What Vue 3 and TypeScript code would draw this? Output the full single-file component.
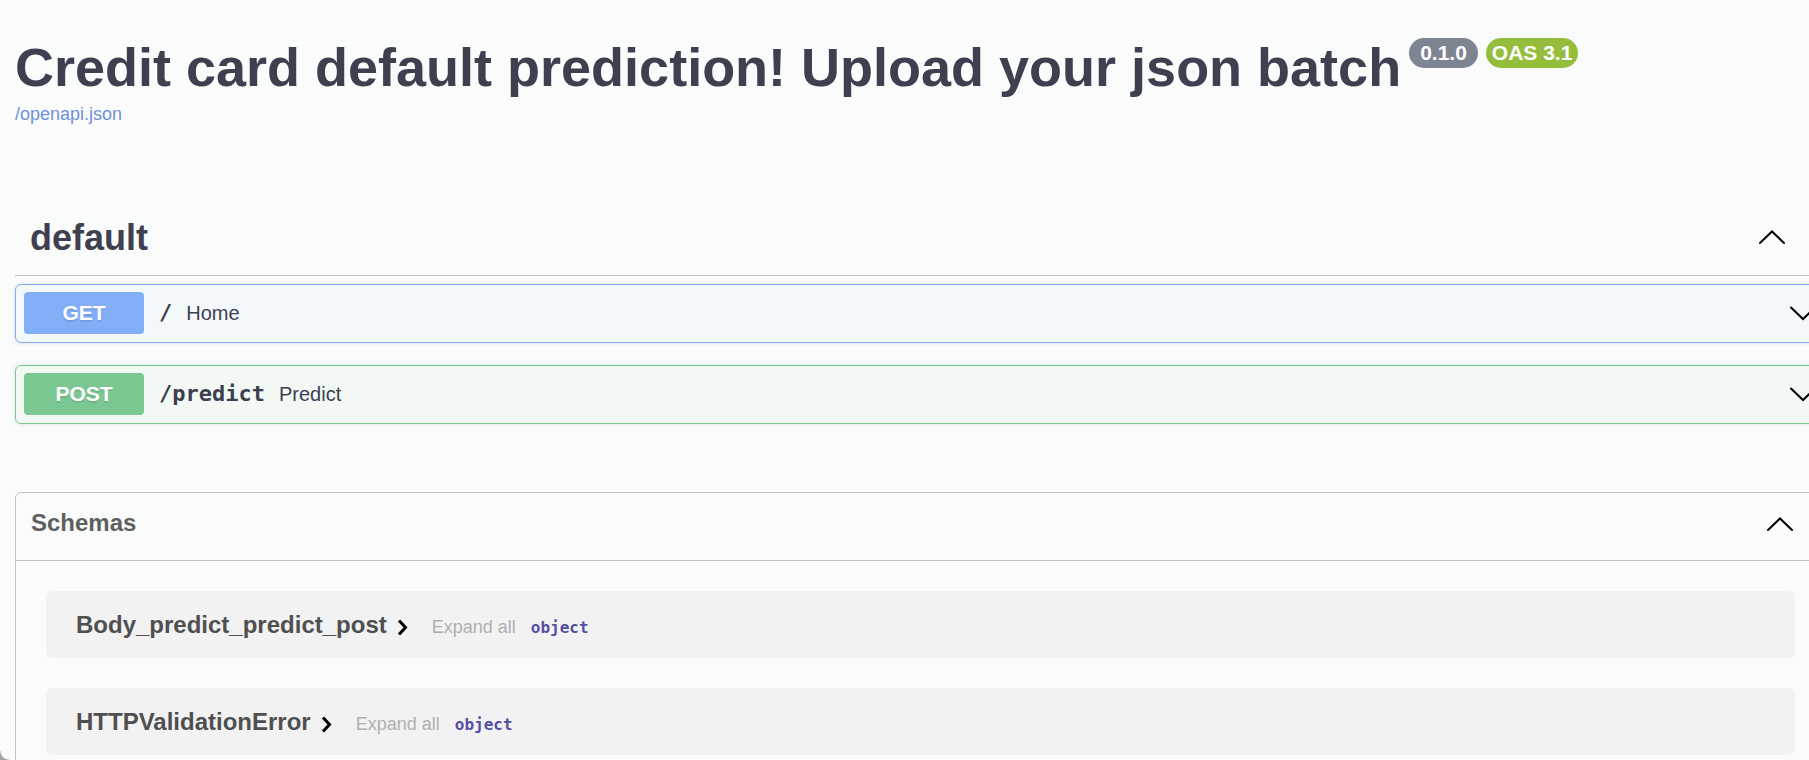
<script setup lang="ts">
import { ref } from 'vue'

interface Operation {
  method: 'get' | 'post'
  path: string
  summary: string
}

interface Schema {
  name: string
  type: string
}

const operations: Operation[] = [
  { method: 'get', path: '/', summary: 'Home' },
  { method: 'post', path: '/predict', summary: 'Predict' },
]

const schemas: Schema[] = [
  { name: 'Body_predict_predict_post', type: 'object' },
  { name: 'HTTPValidationError', type: 'object' },
]

const tagOpen = ref(true)
const schemasOpen = ref(true)
</script>

<template>
  <div class="page">
    <main class="wrapper">
      <header class="info">
        <div class="title-row">
          <h1 class="title">Credit card default prediction! Upload your json batch</h1>
          <span class="badge version">0.1.0</span>
          <span class="badge oas">OAS 3.1</span>
        </div>
        <a class="spec-link" href="/openapi.json">/openapi.json</a>
      </header>

      <section class="tag">
        <h2 class="tag-heading">
          <button class="tag-toggle" type="button" :aria-expanded="tagOpen" @click="tagOpen = !tagOpen">
            <span>default</span>
            <svg class="arrow" :class="{ flipped: !tagOpen }" viewBox="0 0 30 30" aria-hidden="true">
              <path d="M3 20 15 8.500 27 20" />
            </svg>
          </button>
        </h2>
        <div v-if="tagOpen" class="operations">
          <button
            v-for="op in operations"
            :key="op.path"
            type="button"
            class="operation"
            :class="op.method"
          >
            <span class="method">{{ op.method.toUpperCase() }}</span>
            <span class="path">{{ op.path }}</span>
            <span class="summary">{{ op.summary }}</span>
            <svg class="arrow" viewBox="0 0 30 30" aria-hidden="true">
              <path d="M3 9.500 15 21 27 9.500" />
            </svg>
          </button>
        </div>
      </section>

      <section class="models">
        <h3 class="models-heading">
          <button class="models-toggle" type="button" :aria-expanded="schemasOpen" @click="schemasOpen = !schemasOpen">
            <span>Schemas</span>
            <svg class="arrow" :class="{ flipped: !schemasOpen }" viewBox="0 0 30 30" aria-hidden="true">
              <path d="M3 22 15 10.500 27 22" />
            </svg>
          </button>
        </h3>
        <div v-if="schemasOpen" class="model-list">
          <article v-for="schema in schemas" :key="schema.name" class="model">
            <button class="model-name" type="button">
              <span>{{ schema.name }}</span>
              <svg class="caret" viewBox="0 0 24 24" aria-hidden="true">
                <path d="M8 7.500 14.500 14.500 8 21.500" />
              </svg>
            </button>
            <button class="expand" type="button">Expand all</button>
            <strong class="type">{{ schema.type }}</strong>
          </article>
        </div>
      </section>
    </main>
    <div class="corner" aria-hidden="true"></div>
  </div>
</template>

<style>
body {
  margin: 0;
  background: #fafcfb;
}
</style>

<style scoped>
.page {
  height: 100vh;
  overflow-x: hidden;
  overflow-y: auto;
  scrollbar-width: none;
  background: #fafcfb;
  color: #3b4151;
  font-family: "Liberation Sans", Arial, sans-serif;
}

.wrapper {
  margin: 0 -16px 0 15px;
  padding: 36px 0 30px;
}

h1,
h2,
h3 {
  margin: 0;
}

button {
  margin: 0;
  padding: 0;
  border: 0;
  background: none;
  color: inherit;
  font: inherit;
  text-align: left;
  cursor: pointer;
}

.info {
  margin-bottom: 76px;
}

.title-row {
  display: flex;
  align-items: flex-start;
  gap: 8px;
  margin-bottom: 5px;
}

.title {
  font-size: 54px;
  line-height: 62px;
  font-weight: 700;
  color: #3e4050;
}

.badge {
  flex: none;
  margin-top: 2px;
  border-radius: 15px;
  font-size: 21px;
  line-height: 30px;
  font-weight: 700;
  color: #fff;
}

.version {
  padding: 0 11px;
  background: #7d8492;
}

.oas {
  padding: 0 6px;
  background: #95bd3c;
}

.spec-link {
  display: block;
  width: fit-content;
  font-size: 18px;
  line-height: 22px;
  color: #6f8fdb;
  text-decoration: none;
}

.arrow {
  flex: none;
  width: 30px;
  height: 30px;
  margin-left: auto;
  fill: none;
  stroke: #000;
  stroke-width: 2;
  stroke-linecap: round;
}

.flipped {
  transform: rotate(180deg);
}

.tag-heading {
  border-bottom: 1px solid #c2c3c5;
  font-size: 36px;
  line-height: 42px;
  font-weight: 700;
  color: #3e4050;
}

.tag-toggle {
  display: flex;
  align-items: center;
  width: 100%;
  padding: 16px 38px 16px 15px;
}

.operations {
  display: flex;
  flex-direction: column;
  gap: 22px;
  padding-top: 8px;
}

.operation {
  display: flex;
  align-items: center;
  padding: 7px 6px 8px 8px;
  border: 1px solid;
  border-radius: 6px;
  box-shadow: 0 0 4px rgba(0, 0, 0, 0.12);
}

.get {
  border-color: #80aaf5;
  background: #f3f8fb;
}

.post {
  border-color: #7bc792;
  background: #f2f8f4;
}

.method {
  flex: none;
  width: 120px;
  border-radius: 4px;
  font-size: 21px;
  line-height: 42px;
  font-weight: 700;
  text-align: center;
  text-shadow: 0 2px 0 rgba(0, 0, 0, 0.1);
  color: #fff;
}

.get .method {
  background: #82adf7;
}

.post .method {
  background: #7bc792;
}

.path {
  padding: 0 14px 0 15px;
  font-family: "DejaVu Sans Mono", monospace;
  font-size: 22px;
  line-height: 28px;
  font-weight: 700;
  color: #3b3e4c;
}

.summary {
  font-size: 20px;
  line-height: 28px;
}

.models {
  margin-top: 68px;
  border: 1px solid #c1c2c5;
  border-radius: 6px;
}

.models-heading {
  border-bottom: 1px solid #c1c2c5;
  font-size: 24px;
  line-height: 28px;
  font-weight: 700;
  color: #5f5f60;
}

.models-toggle {
  display: flex;
  align-items: center;
  width: 100%;
  padding: 15px 29px 22px 15px;
}

.model-list {
  display: flex;
  flex-direction: column;
  gap: 30px;
  padding: 30px 29px 30px 30px;
}

.model {
  display: flex;
  align-items: baseline;
  padding: 20px 30px 19px;
  border-radius: 6px;
  background: #f2f2f3;
}

.model-name {
  display: flex;
  align-items: center;
  font-size: 24px;
  line-height: 28px;
  font-weight: 700;
  color: #4f4f50;
}

.caret {
  width: 24px;
  height: 24px;
  margin-left: 4px;
  fill: none;
  stroke: #000;
  stroke-width: 3;
}

.expand {
  margin-left: 17px;
  font-size: 18px;
  line-height: 22px;
  color: #afafaf;
}

.type {
  margin-left: 15px;
  font-family: "DejaVu Sans Mono", monospace;
  font-size: 16px;
  line-height: 22px;
  color: #554fa3;
}

.corner {
  position: fixed;
  bottom: 0;
  left: 0;
  width: 9px;
  height: 9px;
  background: radial-gradient(circle at top right, transparent 8px, #a3a3a3 9px);
}
</style>
